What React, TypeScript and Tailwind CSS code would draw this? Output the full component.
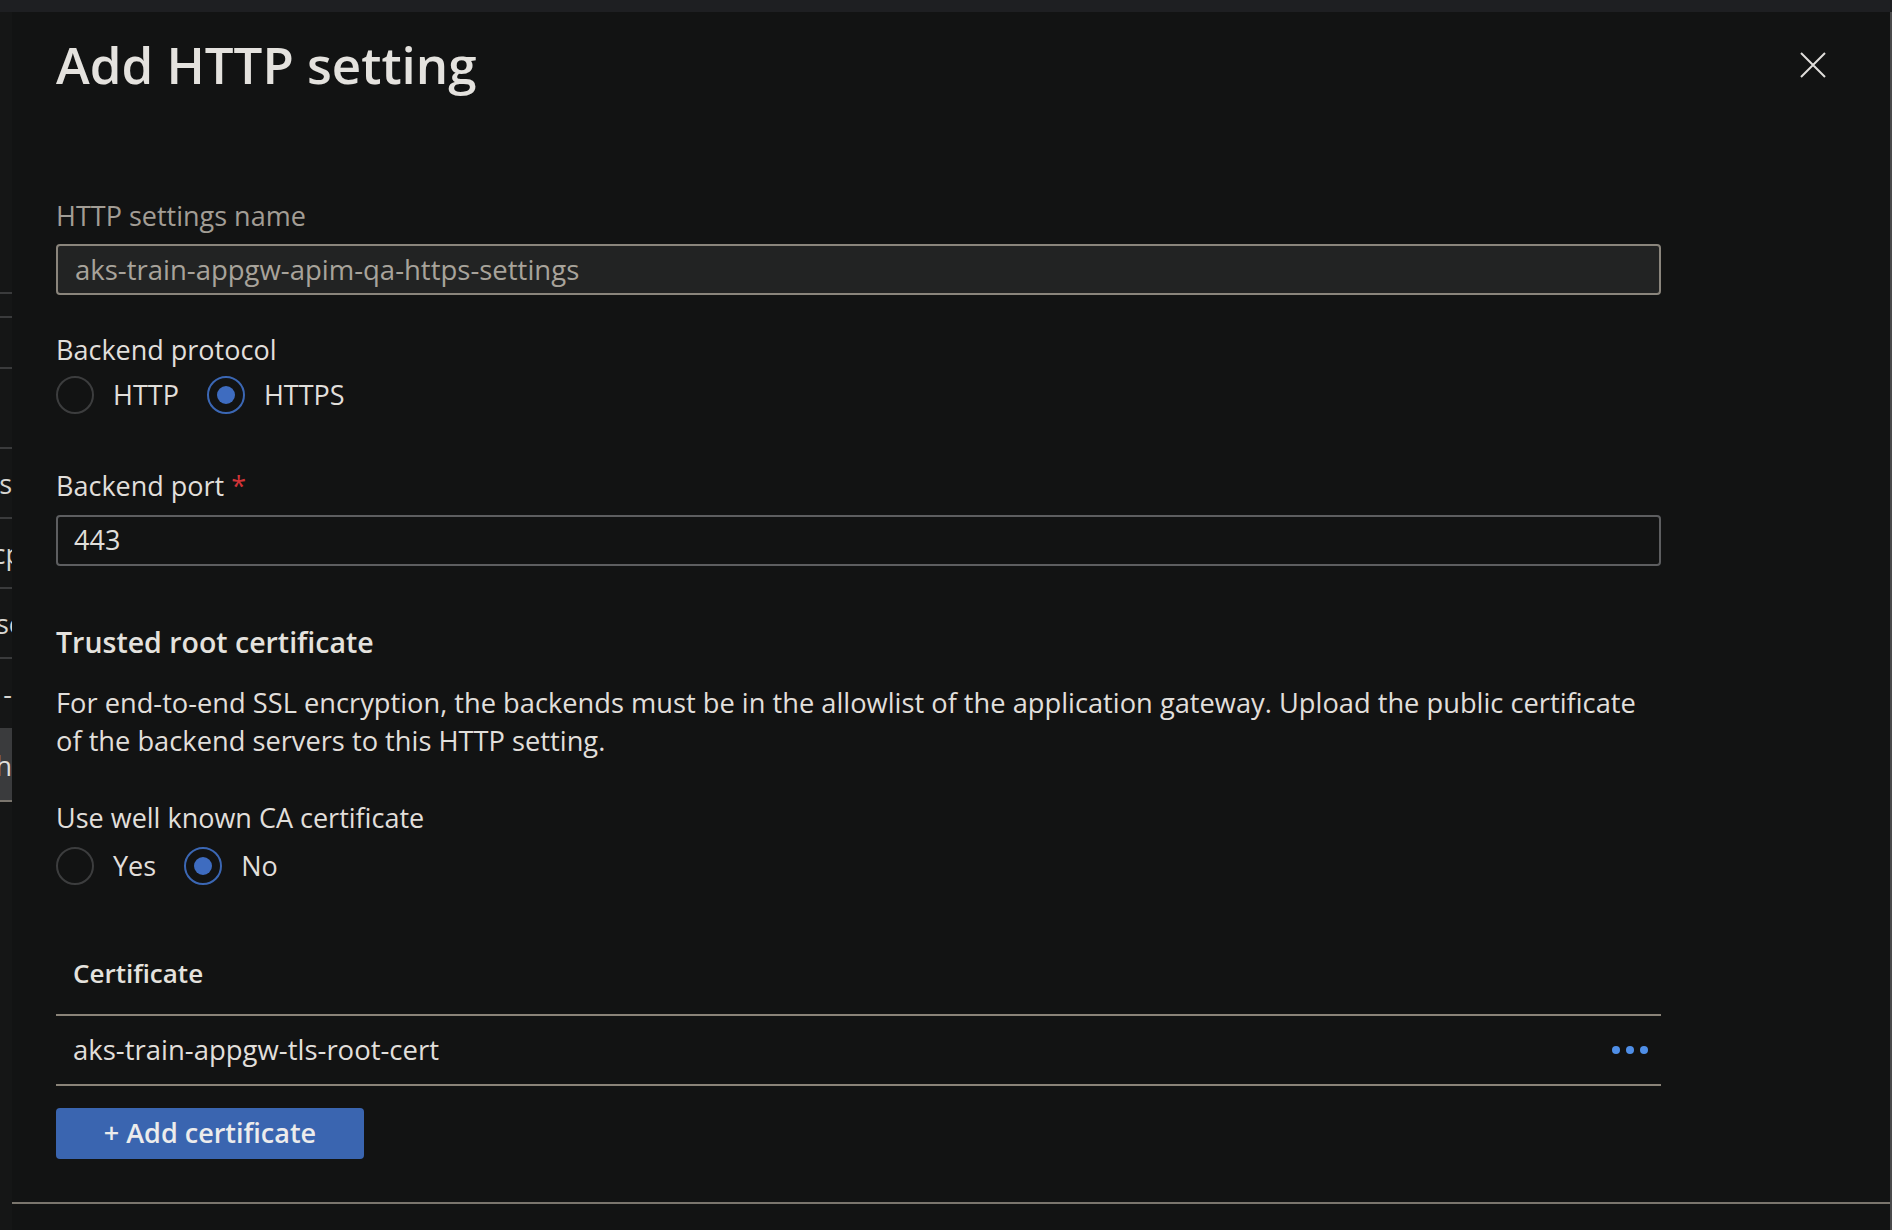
import React from 'react';

// clipped slice of the page behind the blade
const backdropRows = [
  { h: 282, text: '', shift: '' },
  { h: 24, text: '', shift: '' },
  { h: 51, text: '', shift: '' },
  { h: 80, text: '', shift: '' },
  { h: 70, text: 's', shift: '' },
  { h: 70, text: 'cp', shift: '-mr-[10px]' },
  { h: 70, text: 'se', shift: '-mr-[12px]' },
  { h: 71, text: '-', shift: '' },
];

function BackdropStrip() {
  return (
    <div className="flex w-[12px] shrink-0 flex-col overflow-hidden bg-[#151616]">
      {backdropRows.map((row, i) => (
        <div
          key={i}
          style={{ height: row.h }}
          className="flex items-center justify-end border-b-2 border-[#3a3b3c] text-[27px] leading-none whitespace-nowrap text-[#d8d6d2]"
        >
          <span className={row.shift}>{row.text}</span>
        </div>
      ))}
      <div className="flex h-[70px] items-center justify-end bg-[#3a3b3d] text-[27px] leading-none text-[#e1dfdb]">
        h
      </div>
      <div className="flex-1 border-t-2 border-[#7a756d]" />
    </div>
  );
}

function Radio({ checked, label }: { checked?: boolean; label: string }) {
  return (
    <label className="flex items-center gap-[19px]">
      <span
        className={`flex h-[38px] w-[38px] items-center justify-center rounded-full border-2 ${
          checked ? 'border-[#3b67b4]' : 'border-[#3c3d3e]'
        }`}
      >
        {checked && <span className="h-[18px] w-[18px] rounded-full bg-[#3e6cc0]" />}
      </span>
      <span className="text-[27px] leading-[36px]">{label}</span>
    </label>
  );
}

export default function App() {
  return (
    <div className="flex h-[1230px] w-[1892px] flex-col overflow-hidden bg-[#121313] font-['Open_Sans',sans-serif] text-[#e1dfdb]">
      <div className="h-[12px] shrink-0 bg-[#1e1f22]" />
      <div className="flex min-h-0 flex-1">
        <BackdropStrip />

        <section className="flex flex-1 flex-col border-r-2 border-[#4a4a4b]">
          <div className="flex-1 pl-[44px]">
            {/* header */}
            <header className="flex items-start justify-between pt-[20px] pr-[64px]">
              <h1 className="text-[51px] leading-[64px] font-semibold text-[#e4e2de]">Add HTTP setting</h1>
              <button className="mt-[20px] text-[#e0dedb]" aria-label="Close">
                <svg width="26" height="26" viewBox="0 0 26 26" fill="none" stroke="currentColor" strokeWidth="2">
                  <path d="M1 1L25 25M25 1L1 25" />
                </svg>
              </button>
            </header>

            <div className="w-[1605px]">
              <div className="mt-[102px] text-[27px] leading-[36px] text-[#a29d95]">HTTP settings name</div>
              <div className="mt-[10px] flex h-[51px] items-center rounded-[4px] border-2 border-[#8a857c] bg-[#222323] pl-[17px] text-[27.5px] text-[#a8a39b]">
                aks-train-appgw-apim-qa-https-settings
              </div>

              <div className="mt-[37px] text-[27px] leading-[36px]">Backend protocol</div>
              <div className="mt-[8px] flex items-center gap-[28px]">
                <Radio label="HTTP" />
                <Radio label="HTTPS" checked />
              </div>

              <div className="mt-[54px] text-[27px] leading-[36px]">
                Backend port <span className="text-[#d13438]">*</span>
              </div>
              <div className="mt-[11px] flex h-[51px] items-center rounded-[4px] border-2 border-[#5d5e60] pl-[16px] text-[27px]">
                443
              </div>

              <h2 className="mt-[57px] text-[28.5px] leading-[38px] font-semibold text-[#e4e2de]">Trusted root certificate</h2>
              <p className="mt-[23px] text-[27.25px] leading-[38px] whitespace-nowrap">
                <span className="block">
                  For end-to-end SSL encryption, the backends must be in the allowlist of the application gateway. Upload the public certificate
                </span>
                <span className="block">of the backend servers to this HTTP setting.</span>
              </p>

              <div className="mt-[40px] text-[27px] leading-[36px]">Use well known CA certificate</div>
              <div className="mt-[11px] flex items-center gap-[28px]">
                <Radio label="Yes" />
                <Radio label="No" checked />
              </div>

              {/* certificate table */}
              <div className="mt-[70px] border-b-2 border-[#8a8378] pb-[23px] pl-[17px] text-[26px] leading-[36px] font-semibold text-[#e4e2de]">
                Certificate
              </div>
              <div className="flex h-[70px] items-center justify-between border-b-2 border-[#8a8378] pl-[17px] pr-[13px]">
                <span className="text-[27.5px]">aks-train-appgw-tls-root-cert</span>
                <span className="flex items-center gap-[6px]">
                  <span className="h-[8px] w-[8px] rounded-full bg-[#4f8fe8]" />
                  <span className="h-[8px] w-[8px] rounded-full bg-[#4f8fe8]" />
                  <span className="h-[8px] w-[8px] rounded-full bg-[#4f8fe8]" />
                </span>
              </div>

              <button className="mt-[22px] flex h-[51px] w-[308px] items-center justify-center rounded-[4px] bg-[#3a65b0] text-[27px] font-semibold text-[#ececec]">
                + Add certificate
              </button>
            </div>
          </div>
          <div className="h-[28px] shrink-0 border-t-2 border-[#7a756d]" />
        </section>
      </div>
    </div>
  );
}
